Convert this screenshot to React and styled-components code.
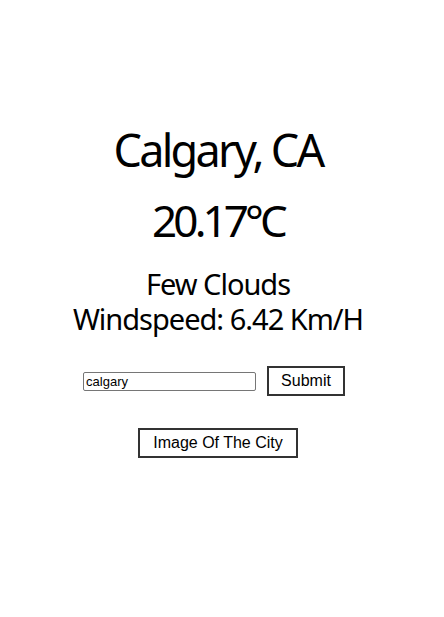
import React, { useState } from "react";
import styled, { createGlobalStyle } from "styled-components";

const GlobalStyle = createGlobalStyle`
	body {
		margin: 0;
		background: #fff;
		color: #000;
		font-family: "Noto Sans", "Open Sans", sans-serif;
	}
`;

const Page = styled.div`
	display: flex;
	flex-direction: column;
	align-items: center;
	padding: 115px 8px 0 0;
	text-align: center;
`;

const City = styled.h1`
	margin: 0;
	font-size: 45px;
	font-weight: 400;
	line-height: 70px;
	letter-spacing: -2.7px;
`;

const Temp = styled.h2`
	margin: 0;
	font-size: 44px;
	font-weight: 400;
	line-height: 70px;
	letter-spacing: -3.9px;
`;

const Info = styled.p`
	margin: 0;
	font-size: 29px;
	line-height: 35px;
	letter-spacing: -1px;
`;

const Details = styled.div`
	margin-top: 11px;
`;

const Form = styled.form`
	display: flex;
	align-items: center;
	gap: 11px;
	margin: 30px 8px 0 0;
`;

const Input = styled.input`
	width: 167px;
	height: 15px;
	padding: 1px 2px;
	font-family: Arial, "Liberation Sans", sans-serif;
	font-size: 13px;
	border: 1px solid #767676;
	border-radius: 2px;
`;

const Button = styled.button`
	background: #fff;
	border: 2px solid #333;
	font-family: Arial, "Liberation Sans", sans-serif;
	font-size: 16px;
	color: #000;
	padding: 0 ${(p) => p.$px || 12}px;
	height: 30px;
	cursor: pointer;
`;

const ImageButton = styled(Button)`
	margin-top: 32px;
`;

export default function App() {
	const [city, setCity] = useState("calgary");
	return (
		<>
			<GlobalStyle />
			<Page>
				<City>Calgary, CA</City>
				<Temp>20.17°C</Temp>
				<Details>
					<Info>Few Clouds</Info>
					<Info>Windspeed: 6.42 Km/H</Info>
				</Details>
				<Form onSubmit={(e) => e.preventDefault()}>
					<Input value={city} onChange={(e) => setCity(e.target.value)} />
					<Button type="submit">Submit</Button>
				</Form>
				<ImageButton type="button" $px={13}>
					Image Of The City
				</ImageButton>
			</Page>
		</>
	);
}
